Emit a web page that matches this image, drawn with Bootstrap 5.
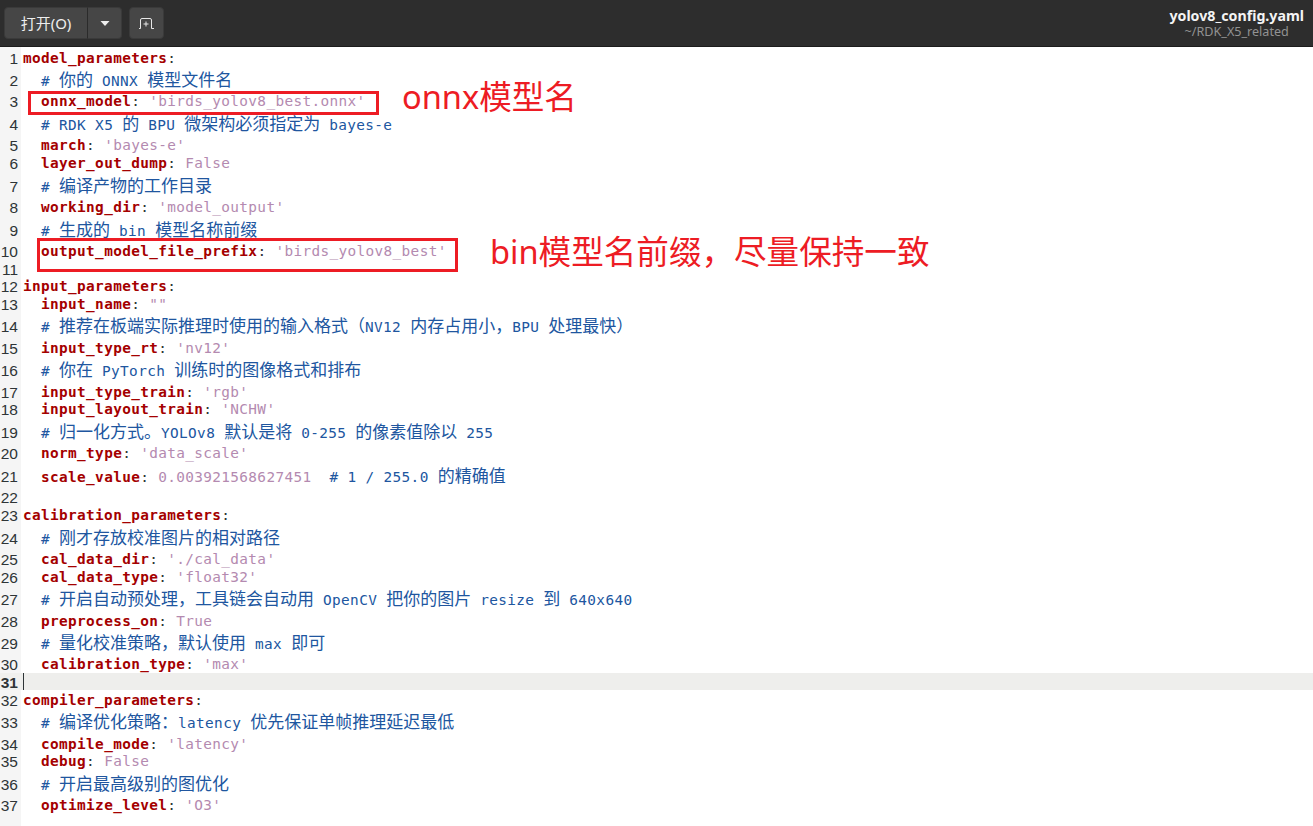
<!doctype html>
<html lang="zh">
<head>
<meta charset="utf-8">
<title>yolov8_config.yaml</title>
<link rel="stylesheet" href="https://cdn.jsdelivr.net/npm/bootstrap@5.3.0/dist/css/bootstrap.min.css">
<style>
html,body{height:100%;overflow:hidden;background:#fff}
.hdr{height:47px;background:#2d2d2d;border-bottom:1px solid #1c1c1c;color:#fff;font-family:"Noto Sans","Noto Sans CJK SC",sans-serif;padding:7px 6px 0 4px}
.tb{height:32px;background:#464646;border:1px solid #3a3a3a;color:#eee;font-size:15px;border-radius:4px;padding:0;display:flex;align-items:center;justify-content:center}
.tb-open{width:84px;border-radius:4px 0 0 4px}
.tb-drop{width:35px;border-radius:0 4px 4px 0;margin-left:-1px;border-left-color:#2b2b2b}
.tb-new{width:35px;margin-left:7px}
.ttl{line-height:1;text-align:center;margin-top:1px;margin-right:3px}
.ttl-a{font-size:14.2px;line-height:16px;font-weight:700;color:#f4f4f4}
.ttl-b{font-size:12.6px;line-height:16px;color:#929292}
.edt{position:relative;height:779px;padding-top:1px;overflow:hidden;background:linear-gradient(90deg,#f5f5f5 21px,#fff 21px);font-family:"DejaVu Sans Mono","Noto Sans CJK SC",monospace;font-size:14.4px;color:#2e3436;letter-spacing:.35px}
.rw{display:flex;height:17.6px;line-height:17.6px;white-space:pre}
.rw .no,.rw .tx{padding-top:1.5px}
.rw.cj{height:26.4px;line-height:26.4px}
.rw.cj .no,.rw.cj .tx{padding-top:2.5px}
.rw.cur{background:#eeeeec;box-shadow:inset 21px 0 0 #f0f0ee}
.no{width:18px;margin-right:5px;text-align:right;flex:none;color:#2e3436;letter-spacing:0;font-family:"Liberation Sans",sans-serif;font-size:15.5px}
.cur .no{font-weight:700}
.tx{flex:1;position:relative}
.k{color:#a40000;font-weight:700}
.c{color:#20569f}
.s{color:#b48ab0}
.zh{font-family:"Noto Sans CJK SC",sans-serif;font-size:17px;line-height:1;letter-spacing:0}
.caret{position:absolute;left:0;top:0;width:1px;height:100%;background:#2e3436}
.redbox{position:absolute;border:3px solid #ed1c24}
.rb-1{left:28px;top:44px;width:351px;height:24px}
.rb-2{left:37px;top:191px;width:421px;height:34px}
.note{position:absolute;color:#ed1c24;font-family:"Noto Sans","Noto Sans CJK SC",sans-serif;font-size:32.6px;line-height:33px;letter-spacing:0;white-space:nowrap}
.nt-1{left:402px;top:33px}
.nt-2{left:490px;top:188px}
</style>
</head>
<body>
<header class="hdr d-flex justify-content-between align-items-start">
  <div class="d-flex">
    <div class="d-flex">
      <button class="btn tb tb-open" type="button">打开(O)</button>
      <button class="btn tb tb-drop" type="button" aria-label="menu"><svg width="12" height="7" viewBox="0 0 12 7"><path d="M1.500 1h9L6 6z" fill="#eee"/></svg></button>
    </div>
    <button class="btn tb tb-new" type="button" aria-label="new"><svg width="15" height="11" viewBox="0 0 15 11" fill="none" stroke="#e8e8e8" stroke-width="1"><path d="M0 10.500h1.500V2q0-1.500 1.500-1.500h8q1.500 0 1.500 1.500v8.500H15"/><path d="M7 3.500v5M4.500 6h5"/></svg></button>
  </div>
  <div class="ttl">
    <div class="ttl-a">yolov8_config.yaml</div>
    <div class="ttl-b">~/RDK_X5_related</div>
  </div>
</header>
<main class="edt">
<div class="rw"><span class="no">1</span><span class="tx"><span class="k">model_parameters</span>:</span></div>
<div class="rw cj"><span class="no">2</span><span class="tx">  <span class="c"># <span class="zh">你的</span> ONNX <span class="zh">模型文件名</span></span></span></div>
<div class="rw"><span class="no">3</span><span class="tx">  <span class="k">onnx_model</span>: <span class="s">'birds_yolov8_best.onnx'</span></span></div>
<div class="rw cj"><span class="no">4</span><span class="tx">  <span class="c"># RDK X5 <span class="zh">的</span> BPU <span class="zh">微架构必须指定为</span> bayes-e</span></span></div>
<div class="rw"><span class="no">5</span><span class="tx">  <span class="k">march</span>: <span class="s">'bayes-e'</span></span></div>
<div class="rw"><span class="no">6</span><span class="tx">  <span class="k">layer_out_dump</span>: <span class="s">False</span></span></div>
<div class="rw cj"><span class="no">7</span><span class="tx">  <span class="c"># <span class="zh">编译产物的工作目录</span></span></span></div>
<div class="rw"><span class="no">8</span><span class="tx">  <span class="k">working_dir</span>: <span class="s">'model_output'</span></span></div>
<div class="rw cj"><span class="no">9</span><span class="tx">  <span class="c"># <span class="zh">生成的</span> bin <span class="zh">模型名称前缀</span></span></span></div>
<div class="rw"><span class="no">10</span><span class="tx">  <span class="k">output_model_file_prefix</span>: <span class="s">'birds_yolov8_best'</span></span></div>
<div class="rw"><span class="no">11</span><span class="tx"></span></div>
<div class="rw"><span class="no">12</span><span class="tx"><span class="k">input_parameters</span>:</span></div>
<div class="rw"><span class="no">13</span><span class="tx">  <span class="k">input_name</span>: <span class="s">""</span></span></div>
<div class="rw cj"><span class="no">14</span><span class="tx">  <span class="c"># <span class="zh">推荐在板端实际推理时使用的输入格式（</span>NV12 <span class="zh">内存占用小，</span>BPU <span class="zh">处理最快）</span></span></span></div>
<div class="rw"><span class="no">15</span><span class="tx">  <span class="k">input_type_rt</span>: <span class="s">'nv12'</span></span></div>
<div class="rw cj"><span class="no">16</span><span class="tx">  <span class="c"># <span class="zh">你在</span> PyTorch <span class="zh">训练时的图像格式和排布</span></span></span></div>
<div class="rw"><span class="no">17</span><span class="tx">  <span class="k">input_type_train</span>: <span class="s">'rgb'</span></span></div>
<div class="rw"><span class="no">18</span><span class="tx">  <span class="k">input_layout_train</span>: <span class="s">'NCHW'</span></span></div>
<div class="rw cj"><span class="no">19</span><span class="tx">  <span class="c"># <span class="zh">归一化方式。</span>YOLOv8 <span class="zh">默认是将</span> 0-255 <span class="zh">的像素值除以</span> 255</span></span></div>
<div class="rw"><span class="no">20</span><span class="tx">  <span class="k">norm_type</span>: <span class="s">'data_scale'</span></span></div>
<div class="rw cj"><span class="no">21</span><span class="tx">  <span class="k">scale_value</span>: <span class="s">0.003921568627451</span>  <span class="c"># 1 / 255.0 <span class="zh">的精确值</span></span></span></div>
<div class="rw"><span class="no">22</span><span class="tx"></span></div>
<div class="rw"><span class="no">23</span><span class="tx"><span class="k">calibration_parameters</span>:</span></div>
<div class="rw cj"><span class="no">24</span><span class="tx">  <span class="c"># <span class="zh">刚才存放校准图片的相对路径</span></span></span></div>
<div class="rw"><span class="no">25</span><span class="tx">  <span class="k">cal_data_dir</span>: <span class="s">'./cal_data'</span></span></div>
<div class="rw"><span class="no">26</span><span class="tx">  <span class="k">cal_data_type</span>: <span class="s">'float32'</span></span></div>
<div class="rw cj"><span class="no">27</span><span class="tx">  <span class="c"># <span class="zh">开启自动预处理，工具链会自动用</span> OpenCV <span class="zh">把你的图片</span> resize <span class="zh">到</span> 640x640</span></span></div>
<div class="rw"><span class="no">28</span><span class="tx">  <span class="k">preprocess_on</span>: <span class="s">True</span></span></div>
<div class="rw cj"><span class="no">29</span><span class="tx">  <span class="c"># <span class="zh">量化校准策略，默认使用</span> max <span class="zh">即可</span></span></span></div>
<div class="rw"><span class="no">30</span><span class="tx">  <span class="k">calibration_type</span>: <span class="s">'max'</span></span></div>
<div class="rw cur"><span class="no">31</span><span class="tx"><span class="caret"></span></span></div>
<div class="rw"><span class="no">32</span><span class="tx"><span class="k">compiler_parameters</span>:</span></div>
<div class="rw cj"><span class="no">33</span><span class="tx">  <span class="c"># <span class="zh">编译优化策略：</span>latency <span class="zh">优先保证单帧推理延迟最低</span></span></span></div>
<div class="rw"><span class="no">34</span><span class="tx">  <span class="k">compile_mode</span>: <span class="s">'latency'</span></span></div>
<div class="rw"><span class="no">35</span><span class="tx">  <span class="k">debug</span>: <span class="s">False</span></span></div>
<div class="rw cj"><span class="no">36</span><span class="tx">  <span class="c"># <span class="zh">开启最高级别的图优化</span></span></span></div>
<div class="rw"><span class="no">37</span><span class="tx">  <span class="k">optimize_level</span>: <span class="s">'O3'</span></span></div>
<div class="redbox rb-1"></div>
<div class="redbox rb-2"></div>
<div class="note nt-1">onnx模型名</div>
<div class="note nt-2">bin模型名前缀，尽量保持一致</div>
</main>
<script src="https://cdn.jsdelivr.net/npm/bootstrap@5.3.0/dist/js/bootstrap.bundle.min.js"></script>
</body>
</html>
